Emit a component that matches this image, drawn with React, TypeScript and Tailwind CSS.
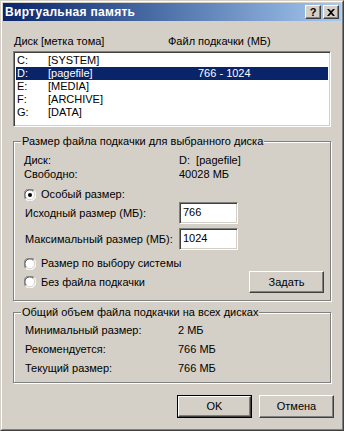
import React from "react";

const font = { fontFamily: '"Liberation Sans", Arial, sans-serif' };

const raised =
  "border border-t-white border-l-white border-r-[#404040] border-b-[#404040] shadow-[inset_-1px_-1px_0_#808080]";
const sunken =
  "border border-t-[#808080] border-l-[#808080] border-b-white border-r-white shadow-[inset_1px_1px_0_#404040,inset_-1px_-1px_0_#d4d0c8]";

function Radio({ checked }: { checked?: boolean }) {
  return (
    <svg width="12" height="12" viewBox="0 0 12 12" className="shrink-0">
      <circle cx="6" cy="6" r="5.5" fill="#fff" />
      <path d="M1.5 10.2 A5.5 5.5 0 0 1 10.2 1.5" stroke="#808080" strokeWidth="1" fill="none" />
      <path d="M10.2 1.5 A5.5 5.5 0 0 1 1.5 10.2" stroke="#fff" strokeWidth="1" fill="none" />
      <path d="M2.3 9.3 A4.5 4.5 0 0 1 9.3 2.3" stroke="#404040" strokeWidth="1" fill="none" />
      <path d="M9.3 2.3 A4.5 4.5 0 0 1 2.3 9.3" stroke="#d4d0c8" strokeWidth="1" fill="none" />
      {checked && <circle cx="6" cy="6" r="2" fill="#000" />}
    </svg>
  );
}

function Group({ title, className, children }: { title: string; className?: string; children: React.ReactNode }) {
  return (
    <div className={`relative border border-[#808080] shadow-[1px_1px_0_#fff,inset_1px_1px_0_#fff] ${className ?? ""}`}>
      <span className="absolute left-[7px] -top-[7px] bg-[#d4d0c8] px-[1px] leading-[13px]">{title}</span>
      {children}
    </div>
  );
}

const drives = [
  { d: "C:", label: "[SYSTEM]", size: "" },
  { d: "D:", label: "[pagefile]", size: "766 - 1024" },
  { d: "E:", label: "[MEDIA]", size: "" },
  { d: "F:", label: "[ARCHIVE]", size: "" },
  { d: "G:", label: "[DATA]", size: "" },
];

export default function App() {
  return (
    <div
      className="w-[344px] h-[431px] bg-[#d4d0c8] text-[11px] text-black border border-t-[#d4d0c8] border-l-[#d4d0c8] border-r-[#404040] border-b-[#404040]"
      style={font}
    >
      <div className="h-full border border-t-white border-l-white border-r-[#808080] border-b-[#808080] p-[1px]">
        {/* Title bar */}
        <div className="h-[18px] flex items-center justify-between bg-gradient-to-r from-[#0a246a] to-[#a6caf0] pl-[2px] pr-[2px]">
          <span className="text-white font-bold text-[12px] leading-[13px] tracking-[0.3px]">Виртуальная память</span>
          <div className="flex gap-[2px]">
            <div className={`w-[16px] h-[14px] bg-[#d4d0c8] flex items-center justify-center font-bold text-[11px] leading-none ${raised}`}>
              ?
            </div>
            <div className={`w-[16px] h-[14px] bg-[#d4d0c8] flex items-center justify-center ${raised}`}>
              <svg width="8" height="7" viewBox="0 0 8 7">
                <path d="M0 0h2l2 2 2-2h2L5 3.5 8 7H6L4 5 2 7H0l3-3.5z" fill="#000" />
              </svg>
            </div>
          </div>
        </div>

        <div className="px-[10px]">
          {/* Header */}
          <div className="flex mt-[14px] leading-[13px]">
            <span className="w-[155px] pl-[1px]">Диск [метка тома]</span>
            <span>Файл подкачки (МБ)</span>
          </div>

          {/* List */}
          <div className={`mt-[3px] h-[76px] bg-white ${sunken} p-[2px]`}>
            {drives.map((r, i) => (
              <div
                key={r.d}
                className={`flex h-[13px] leading-[13px] ${i === 1 ? "bg-[#0a246a] text-white" : ""}`}
              >
                <span className="w-[32px] pl-[1px]">{r.d}</span>
                <span className="w-[150px]">{r.label}</span>
                <span>{r.size}</span>
              </div>
            ))}
          </div>

          {/* Selected drive group */}
          <Group title="Размер файла подкачки для выбранного диска" className="mt-[14px] h-[160px] pt-[11px] pl-[10px] pr-[6px]">
            <div className="flex h-[14px] leading-[14px]">
              <span className="w-[155px]">Диск:</span>
              <span>D:&nbsp;&nbsp;[pagefile]</span>
            </div>
            <div className="flex h-[14px] leading-[14px]">
              <span className="w-[155px]">Свободно:</span>
              <span>40028 МБ</span>
            </div>
            <div className="flex items-center gap-[5px] h-[13px] mt-[7px]">
              <Radio checked />
              <span>Особый размер:</span>
            </div>
            <div className="flex items-center h-[22px] mt-[1px]">
              <span className="w-[155px] pl-[1px] whitespace-nowrap">Исходный размер (МБ):</span>
              <div className={`w-[59px] h-[22px] bg-white ${sunken} px-[3px] leading-[18px]`}>766</div>
            </div>
            <div className="flex items-center h-[22px] mt-[4px]">
              <span className="w-[155px] pl-[1px] whitespace-nowrap">Максимальный размер (МБ):</span>
              <div className={`w-[59px] h-[22px] bg-white ${sunken} px-[3px] leading-[18px]`}>1024</div>
            </div>
            <div className="flex items-center gap-[5px] h-[13px] mt-[7px]">
              <Radio />
              <span>Размер по выбору системы</span>
            </div>
            <div className="flex items-center justify-between h-[22px] mt-[1px]">
              <div className="flex items-center gap-[5px]">
                <Radio />
                <span>Без файла подкачки</span>
              </div>
              <div className={`w-[75px] h-[22px] flex items-center justify-center ${raised}`}>Задать</div>
            </div>
          </Group>

          {/* Totals group */}
          <Group title="Общий объем файла подкачки на всех дисках" className="mt-[11px] h-[71px] pt-[8px] pl-[11px]">
            {[
              ["Минимальный размер:", "2 МБ"],
              ["Рекомендуется:", "766 МБ"],
              ["Текущий размер:", "766 МБ"],
            ].map(([k, v]) => (
              <div key={k} className="flex h-[19px] items-center">
                <span className="w-[153px]">{k}</span>
                <span>{v}</span>
              </div>
            ))}
          </Group>

          {/* Buttons */}
          <div className="flex justify-end gap-[7px] mt-[12px] -mr-[3px]">
            <div className="border border-black">
              <div className={`w-[73px] h-[21px] flex items-center justify-center ${raised}`}>OK</div>
            </div>
            <div className={`w-[75px] h-[23px] flex items-center justify-center ${raised}`}>Отмена</div>
          </div>
        </div>
      </div>
    </div>
  );
}
